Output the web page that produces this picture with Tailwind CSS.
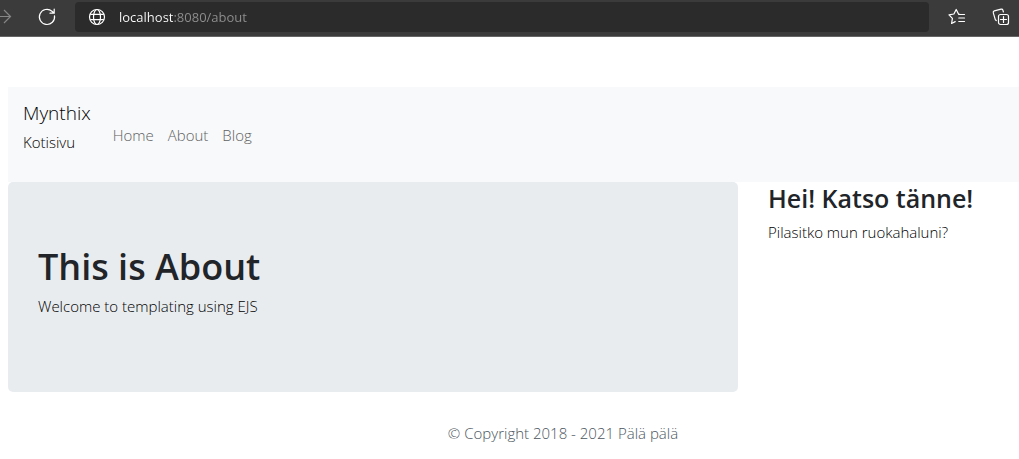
<!DOCTYPE html>
<html lang="fi">
<head>
<meta charset="utf-8">
<meta name="viewport" content="width=device-width, initial-scale=1">
<title>Mynthix - About</title>
<script src="https://cdn.jsdelivr.net/npm/@tailwindcss/browser@4"></script>
</head>
<body class="overflow-x-hidden bg-white font-['Open_Sans','Noto_Sans',sans-serif] text-[15px] font-light leading-6 text-[#212529]">

<div class="flex h-[37px] items-center border-b border-[#656565] bg-[#3b3b3b] pb-[2px] pr-2 text-white">
  <button type="button" aria-label="Forward" class="w-3 shrink-0 text-[#868686]">
    <svg class="block h-5 w-3" viewBox="0 0 12 20" fill="none" stroke="currentColor" stroke-width="1.2"><path d="M0 9.500H10.500M4 3l6.500 6.500L4 16"/></svg>
  </button>
  <button type="button" aria-label="Refresh" class="ml-[25px] shrink-0">
    <svg class="block h-5 w-5" viewBox="0 0 20 20" fill="none" stroke="currentColor" stroke-width="1.200" stroke-linecap="round"><path d="M17.500 8.800A7.600 7.600 0 1 1 15 4.200L17 6M17.200 2.200v4h-4.200"/></svg>
  </button>
  <label class="ml-[18px] flex h-[30px] min-w-0 flex-1 items-center gap-3 rounded bg-[#2b2b2b] pl-3">
    <svg class="block h-5 w-5 shrink-0" viewBox="0 0 20 20" fill="none" stroke="currentColor" stroke-width="1.200"><circle cx="10" cy="10" r="7.500"/><ellipse cx="10" cy="10" rx="3.500" ry="7.500"/><path d="M3.200 7.300h13.600M3.200 12.700h13.600"/></svg>
    <!-- The gradient keeps the host white and greys out the port and path -->
    <input type="text" aria-label="Address" value="localhost:8080/about" class="min-w-0 flex-1 bg-[linear-gradient(90deg,#fff_55px,#909090_55px)] bg-clip-text text-[13px] font-normal leading-5 text-transparent outline-none">
  </label>
  <button type="button" aria-label="Favorites" class="ml-[18px] shrink-0">
    <svg class="block h-5 w-5" viewBox="0 0 20 20" fill="none" stroke="currentColor" stroke-width="1.200" stroke-linejoin="round" stroke-linecap="round"><path d="M12.800 7.300L11.500 7 9.200 2.500 6.900 7l-4.900.8 3.400 3.500-.8 5.200 3.600-1.900M11.800 7.500H17.500M11.800 11H17.500M11.800 14.500H17.500"/></svg>
  </button>
  <button type="button" aria-label="Collections" class="ml-6 shrink-0">
    <svg class="block h-5 w-5" viewBox="0 0 20 20" fill="none" stroke="currentColor" stroke-width="1.200" stroke-linejoin="round" stroke-linecap="round"><path d="M5.300 13.500l-1-.8L2.300 5.800q-.4-1.500 1-1.900l6.800-1.800q1.400-.3 1.800 1l.5 1.900"/><rect x="7.500" y="7.500" width="10" height="10" rx="2"/><path d="M12.500 9.500v6M9.500 12.500h6"/></svg>
  </button>
</div>

<div class="pl-2 pt-[50px]">
  <header>
    <nav class="flex items-center bg-[#f8f9fa] px-[15px] py-2">
      <div class="mr-[22px] flex flex-col pb-[17px] pt-1 text-black">
        <a href="#" class="text-[19px] leading-[29px]">Mynthix</a>
        <a href="#" class="leading-[29px]">Kotisivu</a>
      </div>
      <ul class="flex gap-3.5 text-[#606161]">
        <li><a href="#">Home</a></li>
        <li><a href="#">About</a></li>
        <li><a href="#">Blog</a></li>
      </ul>
    </nav>
  </header>

  <div class="flex items-start gap-[30px]">
    <main class="min-w-0 flex-1 rounded-[5px] bg-[#e9ecef] px-[30px] pb-[74px] pt-[62px]">
      <h1 class="mb-[5px] text-[36px] font-semibold leading-[45px]">This is About</h1>
      <p class="text-black">Welcome to templating using EJS</p>
    </main>
    <aside class="w-[251px] shrink-0">
      <h2 class="mb-[6px] text-[25px] font-semibold leading-8">Hei! Katso tänne!</h2>
      <p class="text-black">Pilasitko mun ruokahaluni?</p>
    </aside>
  </div>

  <footer class="pl-[99px] pt-[29px] text-center text-[#4b555d]">
    <p>© Copyright 2018 - 2021 Pälä pälä</p>
  </footer>
</div>
</body>
</html>
